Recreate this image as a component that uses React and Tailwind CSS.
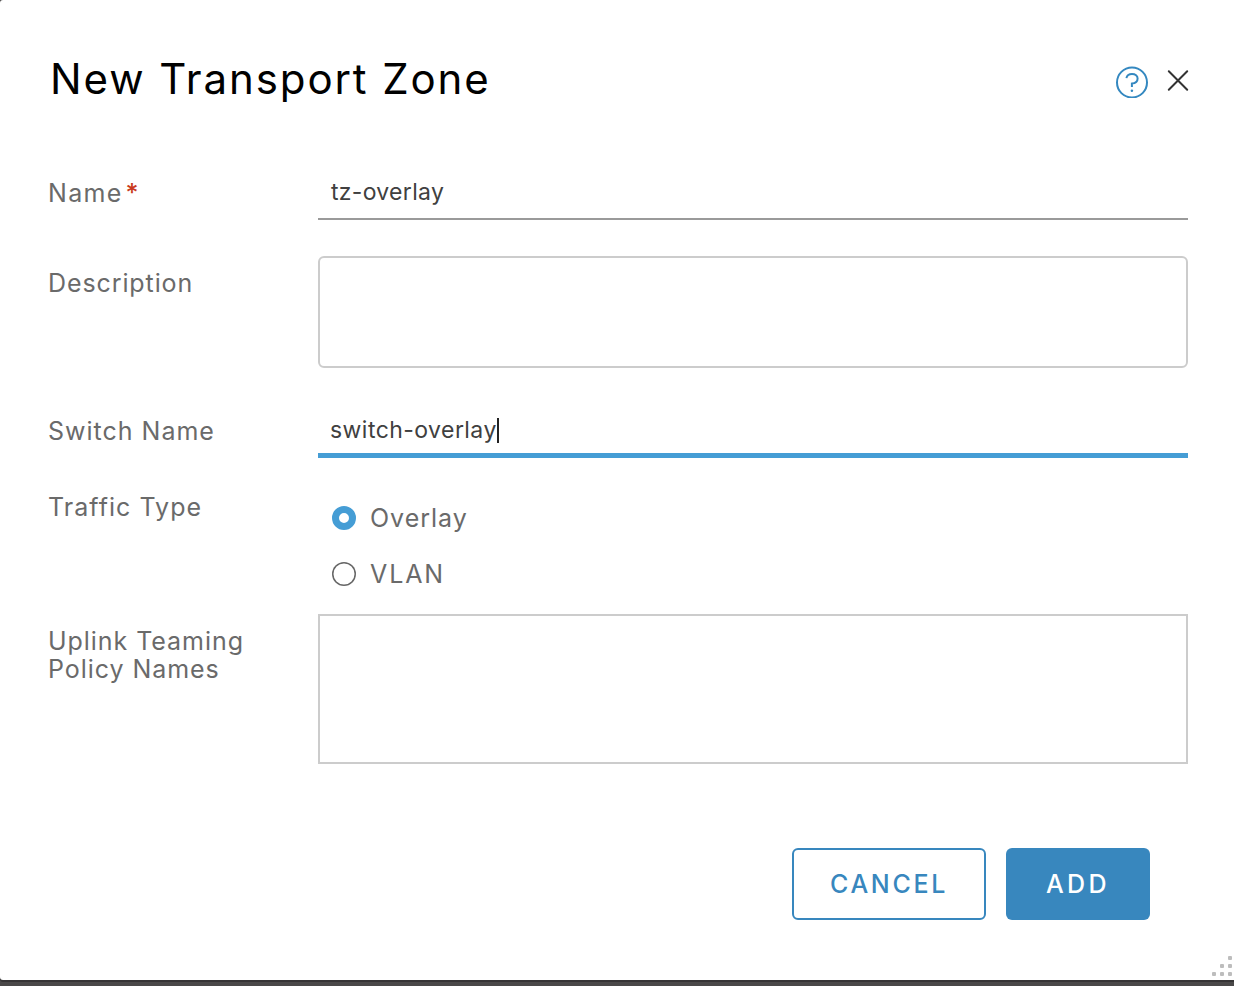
import React from "react";

function Row({ label, required, className, labelClass, children }) {
  return (
    <div className={`flex items-start ${className}`}>
      <div className={`w-[270px] shrink-0 text-[25px] leading-7 text-[#6a6a6a] ${labelClass}`}>
        {label}
        {required}
      </div>
      {children}
    </div>
  );
}

export default function App() {
  return (
    <div className="h-[986px] w-[1234px] overflow-hidden bg-[#4a4848] font-['Inter',sans-serif] font-normal">
      <div className="relative flex h-[980px] flex-col rounded-l-[3px] bg-white pr-[46px] pl-12 shadow-[0_2px_0_#363435]">
        <header className="flex h-[178px] shrink-0 items-start justify-between">
          <h1 className="mt-[53px] ml-[2px] text-[42px] leading-[51px] tracking-[1.900px] whitespace-nowrap text-black">
            New Transport Zone
          </h1>
          <div className="-mr-[2px] mt-[66px] flex">
            <svg className="h-8 w-8" viewBox="0 0 32 32" fill="none" stroke="#3488c0" strokeWidth="2">
              <circle cx="16" cy="16.500" r="15" />
              <path d="M10.400 12.100 C11 9.500 13.200 8.100 16 8.100 C19.300 8.100 21.600 9.900 21.600 12.600 C21.600 15.500 19.300 17.400 15.900 17.600 V21" />
              <circle cx="15.900" cy="24.700" r="1.250" fill="#3488c0" stroke="none" />
            </svg>
            <svg className="ml-[18px] h-7 w-6" viewBox="0 0 24 28" stroke="#333" strokeWidth="2" strokeLinecap="round">
              <path d="M2.800 5.300 L21.200 23.700 M21.200 5.300 L2.800 23.700" />
            </svg>
          </div>
        </header>

        <Row
          className="h-[78px]"
          labelClass="mt-px tracking-[0.950px]"
          label={<span className="tracking-[1.300px]">Name</span>}
          required={<span className="ml-[3px] inline-block text-[25px] leading-none font-medium text-[#c93a1c]">*</span>}
        >
          <div className="h-[42px] flex-1 border-b-2 border-[#9a9a9a] pl-[13px] text-[23px] leading-7 tracking-[0.300px] text-[#404040]">
            tz-overlay
          </div>
        </Row>

        <Row className="h-[160px]" labelClass="mt-[13px] tracking-[0.900px]" label="Description">
          <div className="h-28 flex-1 rounded-md border-2 border-[#ccc]" />
        </Row>

        <Row className="h-[78px]" labelClass="mt-px tracking-[1px]" label="Switch Name">
          <div className="flex h-[42px] flex-1 border-b-[5px] border-[#459dd5] pl-3 text-[23px] leading-7 tracking-[0.450px] text-[#404040]">
            switch-overlay
            <span className="mt-0.5 h-[25px] w-0.5 bg-[#222]" />
          </div>
        </Row>

        <Row className="h-[120px]" labelClass="-mt-px tracking-[1.050px]" label="Traffic Type">
          <div className="ml-[14px] flex flex-col gap-7 pt-[10px] text-[25px] leading-7 tracking-[1px] text-[#6a6a6a]">
            <div className="flex h-7 items-center">
              <span className="mr-[14px] h-6 w-6 rounded-full border-[7.500px] border-[#459dd5] bg-white" />
              <span>Overlay</span>
            </div>
            <div className="flex h-7 items-center">
              <span className="mr-[14px] h-6 w-6 rounded-full bg-white ring-[1.500px] ring-[#666] ring-inset" />
              <span className="tracking-[1.900px]">VLAN</span>
            </div>
          </div>
        </Row>

        <Row className="h-[234px]" labelClass="mt-[13px] tracking-[0.950px]" label={<>Uplink Teaming<br />Policy Names</>}>
          <div className="h-[150px] flex-1 border-2 border-[#ccc]" />
        </Row>

        <footer className="mr-[38px] flex justify-end gap-5 text-[25px] font-medium">
          <button className="h-[72px] w-[194px] rounded-md border-2 border-[#3887be] pt-px tracking-[2.700px] text-[#3887be]">
            CANCEL
          </button>
          <button className="h-[72px] w-36 rounded-md bg-[#3887be] pt-px tracking-[3.400px] text-white">ADD</button>
        </footer>

        <svg className="absolute right-0 bottom-0 h-7 w-6" viewBox="0 0 24 28" fill="#bdbdbd">
          <rect x="18" y="4" width="4" height="4" rx="1" />
          <rect x="10" y="12" width="4" height="4" rx="1" />
          <rect x="18" y="12" width="4" height="4" rx="1" />
          <rect x="2" y="20" width="4" height="4" rx="1" />
          <rect x="10" y="20" width="4" height="4" rx="1" />
          <rect x="18" y="20" width="4" height="4" rx="1" />
        </svg>
      </div>
    </div>
  );
}
